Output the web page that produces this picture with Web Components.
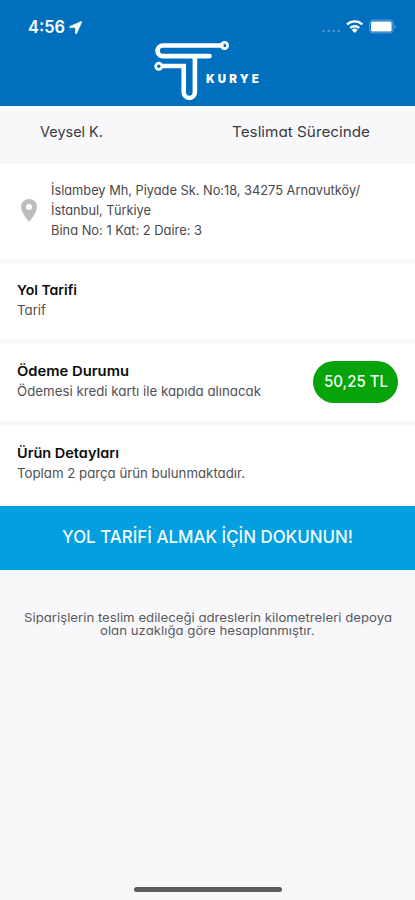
<!DOCTYPE html>
<html lang="tr">
<head>
<meta charset="utf-8">
<meta name="viewport" content="width=device-width">
<title>T Kurye</title>
<style>
html,body{margin:0;height:100%;background:#f8f8fb}
body{overflow:hidden;font-family:Inter,"Noto Sans",sans-serif;font-feature-settings:"cv11";color:#333}
</style>
</head>
<body>
<courier-app></courier-app>
<script>
// A single line of text that fills the width given in pixels:
// its letters are widened, or only spaced out when "track" is set.
class FitText extends HTMLElement {
  connectedCallback() {
    const root = this.attachShadow({mode: 'open'});
    root.innerHTML = '<style>:host{display:block;white-space:nowrap}span{display:inline-block;transform-origin:0 50%}</style><span><slot></slot></span>';
    const span = root.querySelector('span');
    const target = Number(this.getAttribute('w'));
    const width = span.getBoundingClientRect().width;
    const n = [...this.textContent].length;
    if (this.hasAttribute('track')) {
      span.style.letterSpacing = (target - width) / n + 'px';
    } else {
      this.style.width = target + 'px';
      span.style.transform = `scaleX(${target / width})`;
    }
  }
}

class StatusBar extends HTMLElement {
  connectedCallback() {
    this.attachShadow({mode: 'open'}).innerHTML = `
    <style>
    :host{display:flex;height:38px;padding:17px 17px 0 28px;box-sizing:border-box;color:#fff;align-items:flex-start}
    fit-text{font-size:17px;line-height:20px;font-weight:600}
    svg{display:block;fill:#fff}
    .nav{margin:4px 0 0 4px}.sys{margin:0 0 0 auto}
    </style>
    <fit-text w="37">4:56</fit-text>
    <svg class="nav" width="14" height="14" viewBox="0 0 14 14"><path stroke="#fff" stroke-width=".6" d="M12.2 0.5 0.9 5.4C0.200 5.800.3 6.600 1 6.600H6.400V12c0 1 .9 1.200 1.300.3L12.800 1.100C13 .6 12.700.3 12.200 0.500Z"/></svg>
    <svg class="sys" width="76" height="18" viewBox="0 0 76 18">
      <g fill="#4d97d3"><circle cx="1.700" cy="14" r="1.300"/><circle cx="6.700" cy="14" r="1.300"/><circle cx="11.700" cy="14" r="1.300"/><circle cx="16.700" cy="14" r="1.300"/></g>
      <g fill="none" stroke="#fff" stroke-width="2.400"><path d="M25 7.400a11.300 11.300 0 0 1 15.400 0"/><path d="M28.200 11a6.600 6.600 0 0 1 9 0"/></g>
      <path fill="#fff" d="M29.800 12.900a4.200 4.200 0 0 1 5.800 0L32.700 16Z"/>
      <rect x="47.600" y="3.200" width="23.400" height="12.600" rx="3.500" fill="none" stroke="#4f98d3" stroke-width="1.200"/>
      <rect x="49" y="4.600" width="20.600" height="9.800" rx="1.500"/>
      <path fill="#70addf" d="M72.500 7.400q2.400 2 0 4.200Z"/>
    </svg>`;
  }
}

class BrandLogo extends HTMLElement {
  connectedCallback() {
    this.attachShadow({mode: 'open'}).innerHTML = `
    <style>
    :host{display:flex;height:68px;padding-left:154px;color:#fff;box-sizing:border-box}
    svg{display:block}
    fit-text{font-family:Inter;font-size:11.5px;line-height:14px;font-weight:900;margin:34px 0 0 -24px}
    </style>
    <svg width="76" height="66" viewBox="0 0 76 66" fill="none" stroke="#fff" stroke-width="4.600">
      <path d="M67.500 7.500H8.800a5.300 5.300 0 0 0 0 10.600H55.500" stroke-linecap="round"/>
      <circle cx="70.500" cy="7.500" r="3.100" stroke-width="2.700"/>
      <path d="M8 28H29.700V54a5.600 6 0 0 0 11.200 0V18"/>
      <circle cx="4.800" cy="28.300" r="3.100" stroke-width="2.700"/>
    </svg>
    <fit-text track w="56">KURYE</fit-text>`;
  }
}

class OrderHead extends HTMLElement {
  connectedCallback() {
    this.attachShadow({mode: 'open'}).innerHTML = `
    <style>:host{display:flex;justify-content:space-between;box-sizing:border-box;height:58px;padding:16px 45px 0 39.5px;font-size:14.5px;line-height:20px;color:#3c3c40}</style>
    <slot name="customer"></slot><slot name="state"></slot>`;
  }
}

class InfoCard extends HTMLElement {
  connectedCallback() {
    this.attachShadow({mode: 'open'}).innerHTML = `
    <style>
    :host{display:flex;justify-content:space-between;box-sizing:border-box;background:#fff;padding:16px 17px 0 17px;font-size:13px;line-height:20px;color:#505052}
    ::slotted([slot=title]){font-weight:600;font-size:13.5px;color:#0c0c0c}
    </style>
    <div><slot name="title"></slot><slot></slot></div><slot name="end"></slot>`;
  }
}

class AddressCard extends HTMLElement {
  connectedCallback() {
    this.attachShadow({mode: 'open'}).innerHTML = `
    <style>
    :host{display:flex;box-sizing:border-box;background:#fff;padding:16px 0 0 21px;font-size:13px;line-height:20px;color:#48484a}
    svg{display:block;margin:19px 14px 0 0;flex:none}
    </style>
    <svg width="16" height="24" viewBox="0 0 16 24"><path fill="#bdbdbd" fill-rule="evenodd" d="M8 0a8 8 0 0 0-8 8c0 5.700 8 15 8 15s8-9.300 8-15a8 8 0 0 0-8-8Zm0 5a3 3 0 1 1 0 6 3 3 0 0 1 0-6Z"/></svg>
    <div><slot></slot></div>`;
  }
}

class PriceBadge extends HTMLElement {
  connectedCallback() {
    this.attachShadow({mode: 'open'}).innerHTML = `
    <style>:host{display:flex;align-items:center;justify-content:center;width:85px;height:42px;border-radius:21px;background:#07a30b;color:#f2fff0;font-size:16px;font-weight:500;box-sizing:border-box;padding-bottom:2px}</style><slot></slot>`;
  }
}

class RouteButton extends HTMLElement {
  connectedCallback() {
    this.attachShadow({mode: 'open'}).innerHTML = `
    <style>
    :host{display:block}
    button{all:unset;display:flex;box-sizing:border-box;width:100%;height:64px;align-items:center;justify-content:center;background:#029fe1;color:#f3fbff;font-size:17.5px;font-weight:500;padding-bottom:3px}
    </style><button><slot></slot></button>`;
  }
}

class CourierApp extends HTMLElement {
  connectedCallback() {
    this.attachShadow({mode: 'open'}).innerHTML = `
    <style>
    :host{display:flex;flex-direction:column;height:900px;width:415px}
    header{height:106px;background:#006fbd;flex:none}
    main{display:grid;grid-template-rows:58px 95px 80px 82px 83px 66px;flex:none}
    .b,.c,.d{margin-top:5px}
    .c,.d{padding-top:17px}
    route-button{margin-top:2px}
    .note{display:flex;flex-direction:column;align-items:center;margin-top:41px;font-size:12px;line-height:13px;color:#58585b;flex:none}
    .home{width:148px;height:5px;border-radius:3px;background:#5c5c5e;margin:auto auto 8px 134px;flex:none}
    </style>
    <header><status-bar></status-bar><brand-logo></brand-logo></header>
    <main>
      <order-head><fit-text slot="customer" w="63">Veysel K.</fit-text><fit-text slot="state" w="138">Teslimat Sürecinde</fit-text></order-head>
      <address-card class="a">
        <fit-text w="309">İslambey Mh, Piyade Sk. No:18, 34275 Arnavutköy/</fit-text>
        <fit-text w="100">İstanbul, Türkiye</fit-text>
        <fit-text w="151">Bina No: 1 Kat: 2 Daire: 3</fit-text>
      </address-card>
      <info-card class="b"><fit-text slot="title" w="60">Yol Tarifi</fit-text><fit-text w="29">Tarif</fit-text></info-card>
      <info-card class="c"><fit-text slot="title" w="112">Ödeme Durumu</fit-text><fit-text w="244">Ödemesi kredi kartı ile kapıda alınacak</fit-text>
        <price-badge slot="end"><fit-text w="64">50,25 TL</fit-text></price-badge></info-card>
      <info-card class="d"><fit-text slot="title" w="102">Ürün Detayları</fit-text><fit-text w="228">Toplam 2 parça ürün bulunmaktadır.</fit-text></info-card>
      <route-button><fit-text w="291">YOL TARİFİ ALMAK İÇİN DOKUNUN!</fit-text></route-button>
    </main>
    <div class="note"><fit-text w="368">Siparişlerin teslim edileceği adreslerin kilometreleri depoya</fit-text><fit-text w="214.5">olan uzaklığa göre hesaplanmıştır.</fit-text></div>
    <div class="home"></div>`;
  }
}

// Containers come before fit-text, so that every line is measured in its final font.
customElements.define('status-bar', StatusBar);
customElements.define('brand-logo', BrandLogo);
customElements.define('order-head', OrderHead);
customElements.define('info-card', InfoCard);
customElements.define('address-card', AddressCard);
customElements.define('price-badge', PriceBadge);
customElements.define('route-button', RouteButton);
customElements.define('courier-app', CourierApp);
customElements.define('fit-text', FitText);
</script>
</body>
</html>
